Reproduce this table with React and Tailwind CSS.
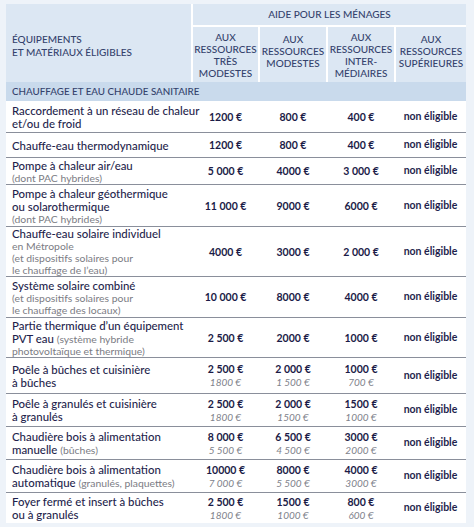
const rows = [
  {
    h: "h-[32px]",
    label: (
      <>
        <div>Raccordement à un réseau de chaleur</div>
        <div>et/ou de froid</div>
      </>
    ),
    vals: [["1200 €"], ["800 €"], ["400 €"]],
  },
  {
    h: "h-[25px]",
    label: <div>Chauffe-eau thermodynamique</div>,
    vals: [["1200 €"], ["800 €"], ["400 €"]],
  },
  {
    h: "h-[27px]",
    label: (
      <>
        <div>Pompe à chaleur air/eau</div>
        <div className="sub">(dont PAC hybrides)</div>
      </>
    ),
    vals: [["5\u202f000 €"], ["4000 €"], ["3\u202f000 €"]],
  },
  {
    h: "h-[42px]",
    label: (
      <>
        <div>Pompe à chaleur géothermique</div>
        <div>ou solarothermique</div>
        <div className="sub">(dont PAC hybrides)</div>
      </>
    ),
    vals: [["11\u202f000 €"], ["9000 €"], ["6000 €"]],
  },
  {
    h: "h-[50px]",
    label: (
      <>
        <div>Chauffe-eau solaire individuel</div>
        <div className="sub">en Métropole</div>
        <div className="sub">(et dispositifs solaires pour</div>
        <div className="sub">le chauffage de l’eau)</div>
      </>
    ),
    vals: [["4000 €"], ["3000 €"], ["2\u202f000 €"]],
  },
  {
    h: "h-[41px]",
    label: (
      <>
        <div>Système solaire combiné</div>
        <div className="sub">(et dispositifs solaires pour</div>
        <div className="sub">le chauffage des locaux)</div>
      </>
    ),
    vals: [["10\u202f000 €"], ["8000 €"], ["4000 €"]],
  },
  {
    h: "h-[40px]",
    label: (
      <>
        <div>Partie thermique d’un équipement</div>
        <div>
          PVT eau <span className="sub">(système hybride</span>
        </div>
        <div className="sub">photovoltaïque et thermique)</div>
      </>
    ),
    vals: [["2\u202f500 €"], ["2000 €"], ["1000 €"]],
  },
  {
    h: "h-[36px]",
    label: (
      <>
        <div>Poêle à bûches et cuisinière</div>
        <div>à bûches</div>
      </>
    ),
    vals: [
      ["2\u202f500 €", "1800 €"],
      ["2\u202f000 €", "1\u202f500 €"],
      ["1000 €", "700 €"],
    ],
  },
  {
    h: "h-[33px]",
    label: (
      <>
        <div>Poêle à granulés et cuisinière</div>
        <div>à granulés</div>
      </>
    ),
    vals: [
      ["2\u202f500 €", "1800 €"],
      ["2\u202f000 €", "1500 €"],
      ["1500 €", "1000 €"],
    ],
  },
  {
    h: "h-[33px]",
    label: (
      <>
        <div>Chaudière bois à alimentation</div>
        <div>
          manuelle <span className="sub">(bûches)</span>
        </div>
      </>
    ),
    vals: [
      ["8\u202f000 €", "5\u202f500 €"],
      ["6\u202f500 €", "4\u202f500 €"],
      ["3000 €", "2000 €"],
    ],
  },
  {
    h: "h-[33px]",
    label: (
      <>
        <div>Chaudière bois à alimentation</div>
        <div>
          automatique <span className="sub">(granulés, plaquettes)</span>
        </div>
      </>
    ),
    vals: [
      ["10000 €", "7\u202f000 €"],
      ["8000 €", "5\u202f500 €"],
      ["4000 €", "3000 €"],
    ],
  },
  {
    h: "h-[30px]",
    label: (
      <>
        <div>Foyer fermé et insert à bûches</div>
        <div>ou à granulés</div>
      </>
    ),
    vals: [
      ["2\u202f500 €", "1800 €"],
      ["1500 €", "1000 €"],
      ["800 €", "600 €"],
    ],
    last: true,
  },
];

const Amount = ({ v }) => (
  <div className="flex flex-col items-center justify-center leading-[12px]">
    <span className="font-bold text-[10.5px] text-[#1b1b47]">{v[0]}</span>
    {v[1] && (
      <span className="italic text-[10px] text-[#80828b] mt-[1px]">{v[1]}</span>
    )}
  </div>
);

const App = () => {
  return (
    <div
      className="w-[474px] h-[527px] bg-[#eef3f9] pt-[4px] pl-[6px] overflow-hidden"
      style={{ fontFamily: "Lato, 'Noto Sans', sans-serif" }}
    >
      <div className="w-[460px]">
        {/* en-tête */}
        <div className="grid grid-cols-[185px_65px_66px_66px_70px] grid-rows-[21px_55px] gap-[2px] bg-white text-[#34426c] font-medium text-[10px] uppercase">
          <div className="row-span-2 bg-[#dce7f3] flex flex-col justify-center px-[6px] leading-[13px] pt-[6px]">
            <div>Équipements</div>
            <div>et matériaux éligibles</div>
          </div>
          <div className="col-span-4 bg-[#dce7f3] flex items-center justify-center">
            Aide pour les ménages
          </div>
          <div className="bg-[#dce7f3] flex flex-col items-center justify-center text-center leading-[12px]">
            <div>Aux</div>
            <div>ressources</div>
            <div>très</div>
            <div>modestes</div>
          </div>
          <div className="bg-[#dce7f3] flex flex-col items-center justify-center text-center leading-[12px] pb-[8px]">
            <div>Aux</div>
            <div>ressources</div>
            <div>modestes</div>
          </div>
          <div className="bg-[#dce7f3] flex flex-col items-center justify-center text-center leading-[12px]">
            <div>Aux</div>
            <div>ressources</div>
            <div>inter-</div>
            <div>médiaires</div>
          </div>
          <div className="bg-[#dce7f3] flex flex-col items-center justify-center text-center leading-[12px] pb-[8px]">
            <div>Aux</div>
            <div>ressources</div>
            <div>supérieures</div>
          </div>
        </div>

        <div className="h-[19px] bg-[#c9daec] flex items-center px-[6px] text-[9.8px] font-medium uppercase text-[#34426c]">
          Chauffage et eau chaude sanitaire
        </div>

        <div className="bg-white">
          {rows.map((r, i) => (
            <div
              key={i}
              className={`grid grid-cols-[186px_67px_68px_68px_71px] items-center ${r.h} ${
                r.last ? "" : "border-b-[1.5px] border-[#8a8f9b]"
              }`}
            >
              <div className="px-[6px] text-[11.4px] leading-[13px] font-medium text-[#1f1f4d] whitespace-nowrap [&_.sub]:text-[10.4px] [&_.sub]:leading-[12px] [&_.sub]:font-normal [&_.sub]:text-[#7b7c84]">
                {r.label}
              </div>
              {r.vals.map((v, j) => (
                <Amount key={j} v={v} />
              ))}
              <div className="text-center font-bold text-[10.5px] text-[#1f1f4d]">
                non éligible
              </div>
            </div>
          ))}
        </div>
      </div>
    </div>
  );
};

export default App;
